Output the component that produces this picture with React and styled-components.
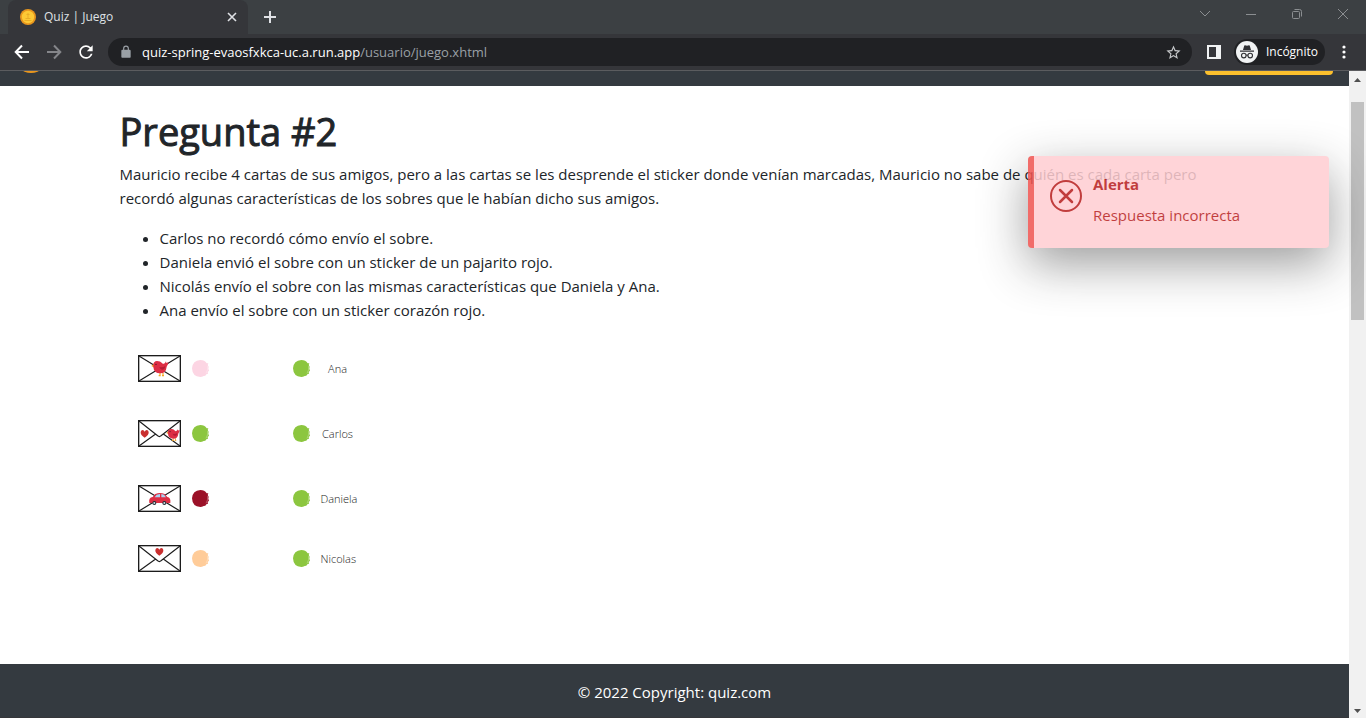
import React from "react";
import styled, { createGlobalStyle } from "styled-components";

const GlobalStyle = createGlobalStyle`
  *, *::before, *::after { box-sizing: border-box; }
  body {
    margin: 0;
    background: #fff;
    color: #212529;
    font-family: "Open Sans", "Noto Sans", sans-serif;
    font-size: 15px;
    line-height: 24px;
  }
  button { font: inherit; color: inherit; }
  svg { display: block; flex: none; }
`;

const Window = styled.div`
  display: flex;
  flex-direction: column;
  min-height: 100vh;
`;

/* ---------- Browser frame ---------- */

const TabStrip = styled.div`
  display: flex;
  align-items: stretch;
  height: 34px;
  padding-left: 8px;
  background: #3c4043;
`;

const Tab = styled.div`
  display: flex;
  align-items: center;
  gap: 8px;
  width: 240px;
  padding: 0 8px 0 12px;
  border-radius: 8px 8px 0 0;
  background: #35363a;
  color: #dfe1e5;
  font-size: 12px;
`;

const TabTitle = styled.span`
  flex: 1;
`;

const IconButton = styled.button`
  display: flex;
  align-items: center;
  justify-content: center;
  flex: none;
  width: ${(p) => p.$width || 32}px;
  height: ${(p) => p.$height || 28}px;
  padding: 0;
  border: 0;
  background: none;
  color: ${(p) => p.$color || "#fff"};
`;

const WindowControls = styled.div`
  display: flex;
  margin-left: auto;
`;

const Toolbar = styled.div`
  display: flex;
  align-items: center;
  height: 37px;
  padding: 0 6px;
  border-bottom: 1px solid #5b5c5f;
  background: #35363a;
`;

const AddressBar = styled.div`
  display: flex;
  align-items: center;
  flex: 1;
  gap: 9px;
  height: 28px;
  margin: 0 6px;
  padding: 0 2px 0 11px;
  border-radius: 14px;
  background: #202124;
  color: #9aa0a6;
  font-size: 13px;
`;

const Url = styled.span`
  flex: 1;
  white-space: nowrap;
  b { color: #fff; font-weight: 400; }
`;

const Profile = styled.button`
  display: flex;
  align-items: center;
  gap: 8px;
  height: 26px;
  margin: 0 3px 0 4px;
  padding: 0 7px 0 2px;
  border: 0;
  border-radius: 13px;
  background: #202124;
  color: #fff;
  font-size: 12px;
`;

const Viewport = styled.div`
  display: flex;
  flex: 1;
`;

const Scrollbar = styled.div`
  display: flex;
  flex-direction: column;
  align-items: center;
  flex: none;
  width: 17px;
  background: #f1f1f1;
`;

const Thumb = styled.div`
  width: 13px;
  height: 218px;
  margin-bottom: auto;
  background: #c1c1c1;
`;

/* ---------- Page ---------- */

const Page = styled.div`
  position: relative;
  display: flex;
  flex: 1;
  flex-direction: column;
  min-width: 0;
`;

const NavBar = styled.header`
  display: flex;
  align-items: flex-end;
  justify-content: space-between;
  height: 15px;
  padding: 0 16px 11px 14px;
  overflow: hidden;
  background: #343a40;
`;

const NavButton = styled.button`
  flex: none;
  width: 128px;
  height: 38px;
  padding: 0;
  border: 0;
  border-radius: 4px;
  background: #fbc02d;
`;

const Brand = styled.a`
  padding-bottom: 2px;
`;

const Main = styled.main`
  flex: 1;
  width: 100%;
  max-width: 1140px;
  margin: 0 auto;
  padding: 21px 15px 48px;
`;

const Title = styled.h1`
  margin: 0 0 7px;
  font-size: 38px;
  font-weight: 500;
  line-height: 48px;
  -webkit-text-stroke: 1px currentColor;
`;

const Statement = styled.p`
  margin: 0 0 16px;
`;

const Clues = styled.ul`
  margin: 0 0 33px;
  padding-left: 40px;
`;

const Board = styled.div`
  padding: 0 18px;
`;

const Pair = styled.div`
  display: grid;
  grid-template-columns: 155px 100px;
  align-items: center;
  height: 27px;
  margin-bottom: ${(p) => (p.$tight ? 33 : 38)}px;
`;

const Side = styled.div`
  display: flex;
  align-items: center;
  gap: 11px;
`;

const Name = styled.span`
  width: 34px;
  color: #222;
  font-size: 11px;
  font-weight: 300;
  text-align: center;
`;

const Footer = styled.footer`
  padding: 16px 16px 13px;
  border-bottom: 1px solid #35363a;
  background: #343a40;
  color: #fff;
  text-align: center;
`;

const Toast = styled.div`
  position: absolute;
  top: 85px;
  right: 20px;
  display: flex;
  gap: 11px;
  width: 301px;
  height: 92px;
  padding: 16px;
  border-left: 6px solid #ef5350;
  border-radius: 4px;
  background: #ffcdd2;
  color: #b71c1c;
  opacity: 0.85;
  box-shadow: 0 16px 48px rgba(0, 0, 0, 0.45);
  svg { margin-top: 8px; }
`;

const ToastTitle = styled.strong`
  display: block;
  margin-bottom: 7px;
  font-weight: 700;
`;

/* ---------- Drawings ---------- */

const Coin = ({ size }) => (
  <svg width={size} height={size} viewBox="0 0 16 16" aria-hidden="true">
    <circle cx="8" cy="8" r="8" fill="#e8961e" />
    <circle cx="8" cy="8" r="6.2" fill="#fdc935" />
    <path d="M4.500 11.500h7M5.500 9.500h5M8 4v5.500M6.500 5.500h3" stroke="#e9ad28" strokeWidth="1" fill="none" />
  </svg>
);

const Line = ({ d, size = 16, width = 2 }) => (
  <svg width={size} height={size} viewBox="0 0 16 16" fill="none" stroke="currentColor" strokeWidth={width} aria-hidden="true">
    <path d={d} />
  </svg>
);

const Solid = ({ d, size }) => (
  <svg width={size} height={size} viewBox="0 0 24 24" fill="currentColor" aria-hidden="true">
    <path d={d} />
  </svg>
);

const RELOAD =
  "M17.65 6.35A7.96 7.96 0 0012 4c-4.42 0-7.99 3.58-7.99 8s3.57 8 7.99 8c3.73 0 6.84-2.55 7.73-6h-2.08A5.99 5.99 0 0112 18c-3.31 0-6-2.69-6-6s2.69-6 6-6c1.66 0 3.14.69 4.22 1.78L13 11h7V4l-2.35 2.35z";
const LOCK =
  "M18 8h-1V6A5 5 0 007 6v2H6a2 2 0 00-2 2v10c0 1.1.9 2 2 2h12a2 2 0 002-2V10a2 2 0 00-2-2zM9 6a3 3 0 016 0v2H9z";
const STAR =
  "M22 9.24l-7.19-.62L12 2 9.19 8.63 2 9.24l5.46 4.73L5.82 21 12 17.27 18.18 21l-1.63-7.03L22 9.24zM12 15.4l-3.76 2.27 1-4.28-3.32-2.88 4.38-.38L12 6.1l1.71 4.04 4.38.38-3.32 2.88 1 4.28L12 15.4z";

const Incognito = () => (
  <svg width="22" height="22" viewBox="0 0 22 22" aria-hidden="true">
    <circle cx="11" cy="11" r="11" fill="#f1f3f4" />
    <path d="M7 9l1.200-4.300q.2-.5.8-.4l2 .5 2-.5q.6-.1.8.4L15 9zM4 9.600h14v1.200H4z" fill="#303135" />
    <g fill="none" stroke="#303135" strokeWidth="1.1">
      <circle cx="7.8" cy="14.6" r="2.300" />
      <circle cx="14.2" cy="14.6" r="2.300" />
      <path d="M10 14.400q1-.8 2 0" />
    </g>
  </svg>
);

const Bird = ({ transform }) => (
  <g transform={transform}>
    <path d="M66 54v8M75 54v8M62 62h6M72 62h6" stroke="#f6a623" strokeWidth="3.5" />
    <path d="M48 26L40 33l9 5z" fill="#f6a623" />
    <path d="M46 30Q46 19 57 18 68 18 71 23q2 4 7 3 4-2 6-7l1 5 6-2q0 7-5 13-2 20-19 20-20-1-21-20z" fill="#dd2e44" />
    <path d="M64 36q9 3 18-3-1 11-10 11-6-1-8-8z" fill="#b51c34" />
    <circle cx="54" cy="28" r="2" fill="#3b1a20" />
  </g>
);

const Heart = ({ transform }) => (
  <path transform={transform} fill="#c92f2f" d="M0 12Q-13 4-12-5-11-11-6-11-2-11 0-6 2-11 6-11q5 0 6 6Q13 4 0 12z" />
);

const Car = () => (
  <g>
    <path d="M34 54q-3-16 10-18l8-9q14-6 28 0l8 9q11 2 9 18z" fill="#dd2e44" />
    <path d="M50 37l6-8 10-2v10zM70 27l8 2 6 8H70z" fill="#a9d3f2" />
    <circle cx="49" cy="54" r="6" fill="#222b33" />
    <circle cx="79" cy="54" r="6" fill="#222b33" />
    <circle cx="49" cy="54" r="3" fill="#ccd6dd" />
    <circle cx="79" cy="54" r="3" fill="#ccd6dd" />
  </g>
);

const CROSS = "M3 3l123 75M126 3L3 78";
const FLAP = "M3 3l56 44 5 3 5-3L126 3M3 78l50-36M126 78L76 42";

const Envelope = ({ label, lines, children }) => (
  <svg width="43" height="27" viewBox="0 0 129 81" role="img" aria-label={label}>
    <rect x="2" y="2" width="125" height="77" fill="#fff" stroke="#1c1c1c" strokeWidth="4" />
    <path d={lines} fill="none" stroke="#1c1c1c" strokeWidth="3.5" />
    {children}
  </svg>
);

const Dot = ({ color }) => (
  <svg width="17" height="17" viewBox="0 0 51 51" aria-hidden="true">
    <path
      d="M25 0q13 0 19 10l5 0-2 5 3 5-1 6 2 6-4 4 1 5-5 2-3 4-5 1q-5 3-10 3Q1 50 0 25 2 1 25 0z"
      fill={color}
    />
    <path d="M47 18q2 12-5 22" stroke="#fff" strokeWidth="1.5" strokeOpacity=".6" fill="none" />
  </svg>
);

const CLUES = [
  "Carlos no recordó cómo envío el sobre.",
  "Daniela envió el sobre con un sticker de un pajarito rojo.",
  "Nicolás envío el sobre con las mismas características que Daniela y Ana.",
  "Ana envío el sobre con un sticker corazón rojo.",
];

const PAIRS = [
  { name: "Ana", color: "#fcd5e3", label: "Sobre con pájaro", lines: CROSS, art: <Bird /> },
  {
    name: "Carlos",
    color: "#8cc63f",
    label: "Sobre con corazón y pájaro",
    lines: FLAP,
    art: (
      <>
        <Heart transform="translate(20 41)" />
        <Bird transform="translate(54 13) scale(.78)" />
      </>
    ),
  },
  { name: "Daniela", color: "#9b1128", label: "Sobre con carro", lines: CROSS, art: <Car />, tight: true },
  { name: "Nicolas", color: "#ffcc99", label: "Sobre con corazón", lines: FLAP, art: <Heart transform="translate(64 20)" /> },
];

export default function App() {
  return (
    <Window>
      <GlobalStyle />
      <TabStrip>
        <Tab>
          <Coin size={16} />
          <TabTitle>Quiz | Juego</TabTitle>
          <IconButton $width={16} $height={16} $color="#dfe1e5" aria-label="Cerrar pestaña">
            <Line d="M4 4l8 8M12 4l-8 8" width={1.6} />
          </IconButton>
        </Tab>
        <IconButton $width={44} $height={34} $color="#dfe1e5" aria-label="Nueva pestaña">
          <Line d="M8 2v12M2 8h12" />
        </IconButton>
        <WindowControls>
          <IconButton $width={46} $color="#8b8e91" aria-label="Buscar pestañas">
            <Line d="M3 5l5 5 5-5" width={1} />
          </IconButton>
          <IconButton $width={46} $color="#8b8e91" aria-label="Minimizar">
            <Line d="M3 8.5h10" width={1} />
          </IconButton>
          <IconButton $width={46} $color="#8b8e91" aria-label="Restaurar">
            <Line d="M4.500 5.500h5q1 0 1 1v5q0 1-1 1h-5q-1 0-1-1v-5q0-1 1-1zM5.500 3.500h5q2 0 2 2v5" width={1} />
          </IconButton>
          <IconButton $width={46} $color="#8b8e91" aria-label="Cerrar">
            <Line d="M3 3l10 10M13 3L3 13" width={1} />
          </IconButton>
        </WindowControls>
      </TabStrip>
      <Toolbar>
        <IconButton aria-label="Atrás">
          <Line d="M15 8H2M8 1.500L1.700 8 8 14.500" />
        </IconButton>
        <IconButton $color="#85868a" aria-label="Adelante">
          <Line d="M1 8h13M8 1.500L14.300 8 8 14.500" />
        </IconButton>
        <IconButton aria-label="Recargar">
          <Solid d={RELOAD} size={20} />
        </IconButton>
        <AddressBar>
          <Solid d={LOCK} size={14} />
          <Url>
            <b>quiz-spring-evaosfxkca-uc.a.run.app</b>/usuario/juego.xhtml
          </Url>
          <IconButton $color="#c6c8ca" aria-label="Añadir a marcadores">
            <Solid d={STAR} size={17} />
          </IconButton>
        </AddressBar>
        <IconButton aria-label="Panel lateral">
          <svg width="14" height="14" viewBox="0 0 14 14" aria-hidden="true">
            <path d="M0 0h14v14H0zM2 2v10h7V2z" fill="#f1f3f4" fillRule="evenodd" />
          </svg>
        </IconButton>
        <Profile>
          <Incognito />
          Incógnito
        </Profile>
        <IconButton aria-label="Menú">
          <svg width="4" height="14" viewBox="0 0 4 14" fill="#fff" aria-hidden="true">
            <circle cx="2" cy="2" r="1.600" />
            <circle cx="2" cy="7" r="1.600" />
            <circle cx="2" cy="12" r="1.600" />
          </svg>
        </IconButton>
      </Toolbar>
      <Viewport>
        <Page>
          <NavBar>
            <Brand href="#" aria-label="Inicio">
              <Coin size={34} />
            </Brand>
            <NavButton aria-label="Cuenta" />
          </NavBar>
          <Main>
            <Title>Pregunta #2</Title>
            <Statement>
              Mauricio recibe 4 cartas de sus amigos, pero a las cartas se les desprende el sticker donde venían
              marcadas, Mauricio no sabe de quién es cada carta pero recordó algunas características de los sobres
              que le habían dicho sus amigos.
            </Statement>
            <Clues>
              {CLUES.map((clue) => (
                <li key={clue}>{clue}</li>
              ))}
            </Clues>
            <Board>
              {PAIRS.map((pair) => (
                <Pair key={pair.name} $tight={pair.tight}>
                  <Side>
                    <Envelope label={pair.label} lines={pair.lines}>
                      {pair.art}
                    </Envelope>
                    <Dot color={pair.color} />
                  </Side>
                  <Side>
                    <Dot color="#8cc63f" />
                    <Name>{pair.name}</Name>
                  </Side>
                </Pair>
              ))}
            </Board>
          </Main>
          <Footer>© 2022 Copyright: quiz.com</Footer>
          <Toast role="alert">
            <svg width="32" height="32" viewBox="0 0 32 32" fill="none" stroke="currentColor" strokeWidth="2" aria-hidden="true">
              <circle cx="16" cy="16" r="15" />
              <path d="M10 10l12 12M22 10L10 22" strokeWidth="2.500" strokeLinecap="round" />
            </svg>
            <div>
              <ToastTitle>Alerta</ToastTitle>
              Respuesta incorrecta
            </div>
          </Toast>
        </Page>
        <Scrollbar aria-hidden="true">
          <svg width="17" height="31" viewBox="0 0 17 31">
            <path d="M5 11l3.500-4 3.500 4z" fill="#505050" />
          </svg>
          <Thumb />
          <svg width="17" height="17" viewBox="0 0 17 17">
            <path d="M5 8l3.500 4 3.500-4z" fill="#505050" />
          </svg>
        </Scrollbar>
      </Viewport>
    </Window>
  );
}
